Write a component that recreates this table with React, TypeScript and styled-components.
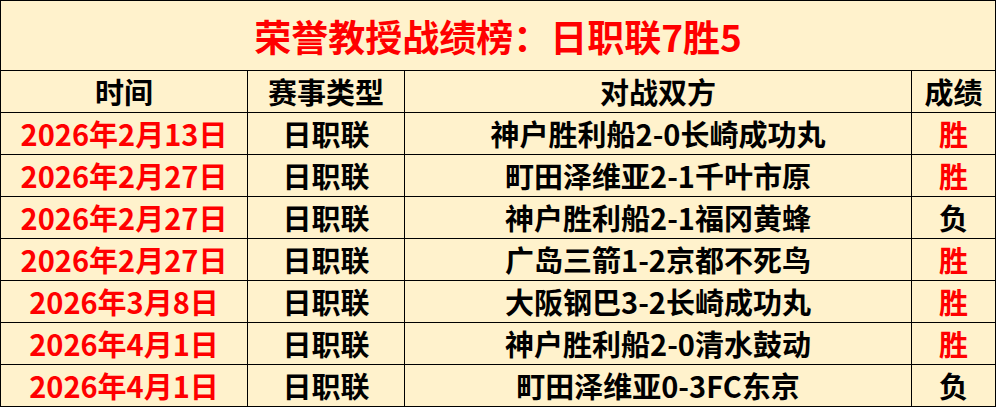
import React from 'react'
import styled, { createGlobalStyle } from 'styled-components'

const GlobalStyle = createGlobalStyle`
  html, body {
    margin: 0;
    padding: 0;
    background: #fff2cc;
  }
  * {
    box-sizing: border-box;
  }
`

const Board = styled.div`
  display: grid;
  grid-template-columns: 247px 157px 507px 84px;
  grid-template-rows: 70px repeat(8, 42px);
  width: 996px;
  height: 407px;
  border-left: 1px solid #000;
  border-top: 1px solid #000;
  background: #fff2cc;
  font-family: 'Noto Sans CJK SC', 'Microsoft YaHei', sans-serif;
  font-weight: 700;
`

const Cell = styled.div<{ $red?: boolean }>`
  display: flex;
  align-items: center;
  justify-content: center;
  border-right: 1px solid #000;
  border-bottom: 1px solid #000;
  font-size: 29px;
  line-height: 1;
  white-space: nowrap;
  color: ${(p) => (p.$red ? '#ff0000' : '#000')};
`

const Title = styled(Cell)`
  grid-column: 1 / -1;
  font-size: 37px;
  padding-top: 2px;
  color: #ff0000;
`

type Match = {
  date: string
  league: string
  teams: string
  result: string
}

const matches: Match[] = [
  { date: '2026年2月13日', league: '日职联', teams: '神户胜利船2-0长崎成功丸', result: '胜' },
  { date: '2026年2月27日', league: '日职联', teams: '町田泽维亚2-1千叶市原', result: '胜' },
  { date: '2026年2月27日', league: '日职联', teams: '神户胜利船2-1福冈黄蜂', result: '负' },
  { date: '2026年2月27日', league: '日职联', teams: '广岛三箭1-2京都不死鸟', result: '胜' },
  { date: '2026年3月8日', league: '日职联', teams: '大阪钢巴3-2长崎成功丸', result: '胜' },
  { date: '2026年4月1日', league: '日职联', teams: '神户胜利船2-0清水鼓动', result: '胜' },
  { date: '2026年4月1日', league: '日职联', teams: '町田泽维亚0-3FC东京', result: '负' },
]

const headers = ['时间', '赛事类型', '对战双方', '成绩']

const App = () => (
  <>
    <GlobalStyle />
    <Board>
      <Title>荣誉教授战绩榜：日职联7胜5</Title>
      {headers.map((h) => (
        <Cell key={h}>{h}</Cell>
      ))}
      {matches.map((m, i) => (
        <React.Fragment key={i}>
          <Cell $red>{m.date}</Cell>
          <Cell>{m.league}</Cell>
          <Cell>{m.teams}</Cell>
          <Cell $red={m.result === '胜'}>{m.result}</Cell>
        </React.Fragment>
      ))}
    </Board>
  </>
)

export default App
